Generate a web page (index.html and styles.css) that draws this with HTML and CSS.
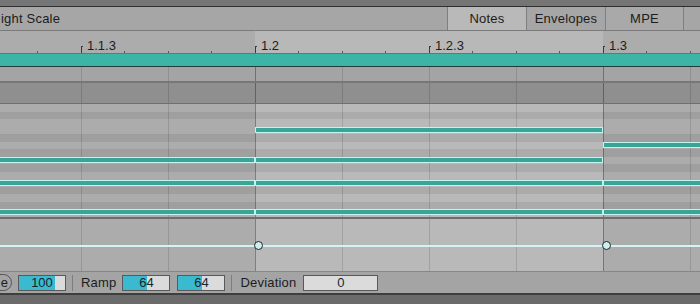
FILE: index.html
```html
<!DOCTYPE html>
<html lang="en">

<head>
    <meta charset="UTF-8">
    <meta name="viewport" content="width=device-width, initial-scale=1.0">
    <title>Clip Notes</title>
    <link rel="stylesheet" href="styles.css">
</head>

<body>
    <div class="editor">
        <div class="topbar"></div>

        <div class="header">
            <div class="title">ight Scale</div>
            <div class="tab active">Notes</div>
            <div class="tab">Envelopes</div>
            <div class="tab mpe">MPE</div>
            <div class="tab rest"></div>
        </div>

        <div class="ruler">
            <div class="ruler-track">
                <div class="beat"></div>
                <div class="beat"><span>1.1.3</span></div>
                <div class="beat"><span>1.2</span></div>
                <div class="beat"><span>1.2.3</span></div>
                <div class="beat"><span>1.3</span></div>
            </div>
        </div>

        <div class="loop"></div>
        <div class="fold grid"></div>
        <div class="scale grid"></div>

        <!-- piano roll: rows from D down to C -->
        <div class="keys band">
            <div class="row"></div>
            <div class="row black"></div>
            <div class="row"></div>
            <div class="row"></div>
            <div class="row black"></div>
            <div class="row"></div>
            <div class="row black"></div>
            <div class="row"></div>
            <div class="row black"></div>
            <div class="row"></div>
            <div class="row"></div>
            <div class="row black"></div>
            <div class="row"></div>
            <div class="row black"></div>
            <div class="row"></div>

            <div class="note" style="top: 23px; left: 255px; width: 348px;"></div>
            <div class="note" style="top: 38px; left: 603px; width: 120px;"></div>
            <div class="note" style="top: 53px; left: -5px; width: 260px;"></div>
            <div class="note" style="top: 53px; left: 255px; width: 348px;"></div>
            <div class="note" style="top: 76px; left: -5px; width: 260px;"></div>
            <div class="note" style="top: 76px; left: 255px; width: 348px;"></div>
            <div class="note" style="top: 76px; left: 603px; width: 120px;"></div>
            <div class="note" style="top: 105px; left: -5px; width: 260px;"></div>
            <div class="note" style="top: 105px; left: 255px; width: 348px;"></div>
            <div class="note" style="top: 105px; left: 603px; width: 120px;"></div>
        </div>

        <div class="velocity band">
            <div class="vel-line"></div>
            <div class="point" style="left: 254px;"></div>
            <div class="point" style="left: 602px;"></div>
        </div>

        <div class="controls">
            <div class="pill">e</div>
            <div class="field">
                <div class="fill" style="width: 78.7%;"></div>
                <span class="value">100</span>
            </div>
            <div class="sep"></div>
            <div class="label ramp">Ramp</div>
            <div class="field">
                <div class="fill" style="width: 50.4%;"></div>
                <span class="value">64</span>
            </div>
            <div class="field">
                <div class="fill" style="width: 50.4%;"></div>
                <span class="value">64</span>
            </div>
            <div class="sep"></div>
            <div class="label deviation">Deviation</div>
            <div class="field long">
                <span class="value">0</span>
            </div>
        </div>

        <div class="bottom"></div>
    </div>
</body>

</html>
```

FILE: styles.css
```css
body {
    margin: 0;
    overflow: hidden;
    font-family: "Liberation Sans", Arial, sans-serif;
    font-size: 13px;
    color: #1c1c1c;
    background-color: #6b6b6b;
}

.editor {
    width: 700px;
    height: 304px;
    overflow: hidden;
}

.topbar {
    height: 6px;
    background-color: #757575;
    border-bottom: 1px solid #2e2e2e;
}

/* header with tabs */
.header {
    display: flex;
    height: 23px;
    line-height: 24px;
    background-color: #a6a6a6;
    border-bottom: 1px solid #7a7a7a;
}

.title {
    flex: 1;
    padding-left: 1px;
    letter-spacing: .2px;
    white-space: nowrap;
}

.tab {
    flex: 0 0 79px;
    box-sizing: border-box;
    border-left: 1px solid #7f7f7f;
    text-align: center;
    letter-spacing: .2px;
}

.tab.active {
    background-color: #b9b9b9;
}

.tab.mpe {
    flex-basis: 78px;
    background-color: #a9a9a9;
}

.tab.rest {
    flex-basis: 17px;
}

/* ruler */
.ruler {
    height: 22px;
    overflow: hidden;
    background: linear-gradient(to right, #acacac 0 255px, #b8b8b8 255px 603px, #acacac 603px);
}

.ruler-track {
    display: flex;
    height: 100%;
    margin-left: -93px;
}

.beat {
    flex: 0 0 174px;
    display: flex;
    align-items: flex-end;
    background-image: linear-gradient(#555, #555), linear-gradient(#555, #555), linear-gradient(#555, #555);
    background-size: 1px 2px;
    background-repeat: no-repeat;
    background-position: 43px 100%, 87px 100%, 130px 100%;
}

.beat::before {
    content: '';
    width: 1px;
    height: 6px;
    border-left: 1px solid #3a3a3a;
    border-top: 1px solid #3a3a3a;
}

.beat span {
    margin-left: 4px;
    line-height: 13px;
    padding-bottom: 1px;
}

.loop {
    height: 12px;
    background-color: #3cb4a6;
    border-top: 1px solid #2f8f84;
    border-bottom: 1px solid #1f3e3a;
}

/* vertical grid lines */
.grid {
    background-image:
        linear-gradient(to right, transparent 255px, rgba(0, 0, 0, .22) 255px 256px, transparent 256px 603px, rgba(0, 0, 0, .22) 603px 604px, transparent 604px),
        repeating-linear-gradient(to right, transparent 0 86px, rgba(0, 0, 0, .13) 86px 87px);
    background-position: 0 0, -5px 0;
}

.band {
    background-image:
        linear-gradient(to right, transparent 255px, rgba(0, 0, 0, .22) 255px 256px, transparent 256px 603px, rgba(0, 0, 0, .22) 603px 604px, transparent 604px),
        repeating-linear-gradient(to right, transparent 0 86px, rgba(0, 0, 0, .13) 86px 87px),
        linear-gradient(to right, #acacac 0 255px, #b9b9b9 255px 603px, #acacac 603px);
    background-position: 0 0, -5px 0, 0 0;
}

.fold {
    height: 14px;
    background-color: #a4a4a4;
    border-bottom: 2px solid #777;
}

.scale {
    height: 20px;
    background-color: #8f8f8f;
    border-bottom: 1px solid #6f6f6f;
}

.keys {
    position: relative;
    height: 113px;
    display: grid;
    grid-template-rows: repeat(15, 1fr);
    overflow: hidden;
}

.row.black {
    background-color: rgba(0, 0, 0, .075);
}

.note {
    position: absolute;
    height: 6px;
    box-sizing: border-box;
    background-color: #3aa597;
    border: 1px solid #c2f3ee;
}

/* velocity lane */
.velocity {
    position: relative;
    height: 52px;
    border-top: 2px solid #6d6d6d;
    border-bottom: 1px solid #868686;
}

.vel-line {
    position: absolute;
    left: 0;
    right: 0;
    top: 26px;
    height: 2px;
    background-color: #d3f4f2;
}

.point {
    position: absolute;
    top: 22px;
    width: 9px;
    height: 9px;
    box-sizing: border-box;
    border: 1.5px solid #1b2625;
    border-radius: 50%;
    background-color: #cdeff0;
}

/* bottom controls */
.controls {
    display: flex;
    align-items: center;
    height: 21px;
    background-color: #a4a4a4;
    border-bottom: 2px solid #3e3e3e;
}

.pill {
    flex: 0 0 32px;
    margin-left: -20px;
    height: 17px;
    box-sizing: border-box;
    border: 1px solid #555;
    border-radius: 9px;
    text-align: right;
    padding-right: 3px;
    line-height: 15px;
}

.field {
    position: relative;
    flex: 0 0 48px;
    height: 16px;
    margin-left: 6px;
    box-sizing: border-box;
    border: 1px solid #595959;
    background-color: #dbdbdb;
    text-align: center;
    line-height: 14px;
}

.field + .field {
    margin-left: 7px;
}

.field.long {
    flex-basis: 75px;
}

.fill {
    position: absolute;
    left: 0;
    top: 0;
    bottom: 0;
    background-color: #3bb9cf;
}

.value {
    position: relative;
    color: #16262c;
}

.sep {
    flex: 0 0 1px;
    height: 16px;
    margin: 0 8px 0 6px;
    background-color: #7d7d7d;
}

.label {
    letter-spacing: .2px;
}

.label.ramp {
    flex: 0 0 32px;
}

.label.deviation {
    flex: 0 0 57px;
}

.bottom {
    height: 9px;
    background-color: #6b6b6b;
}
```
